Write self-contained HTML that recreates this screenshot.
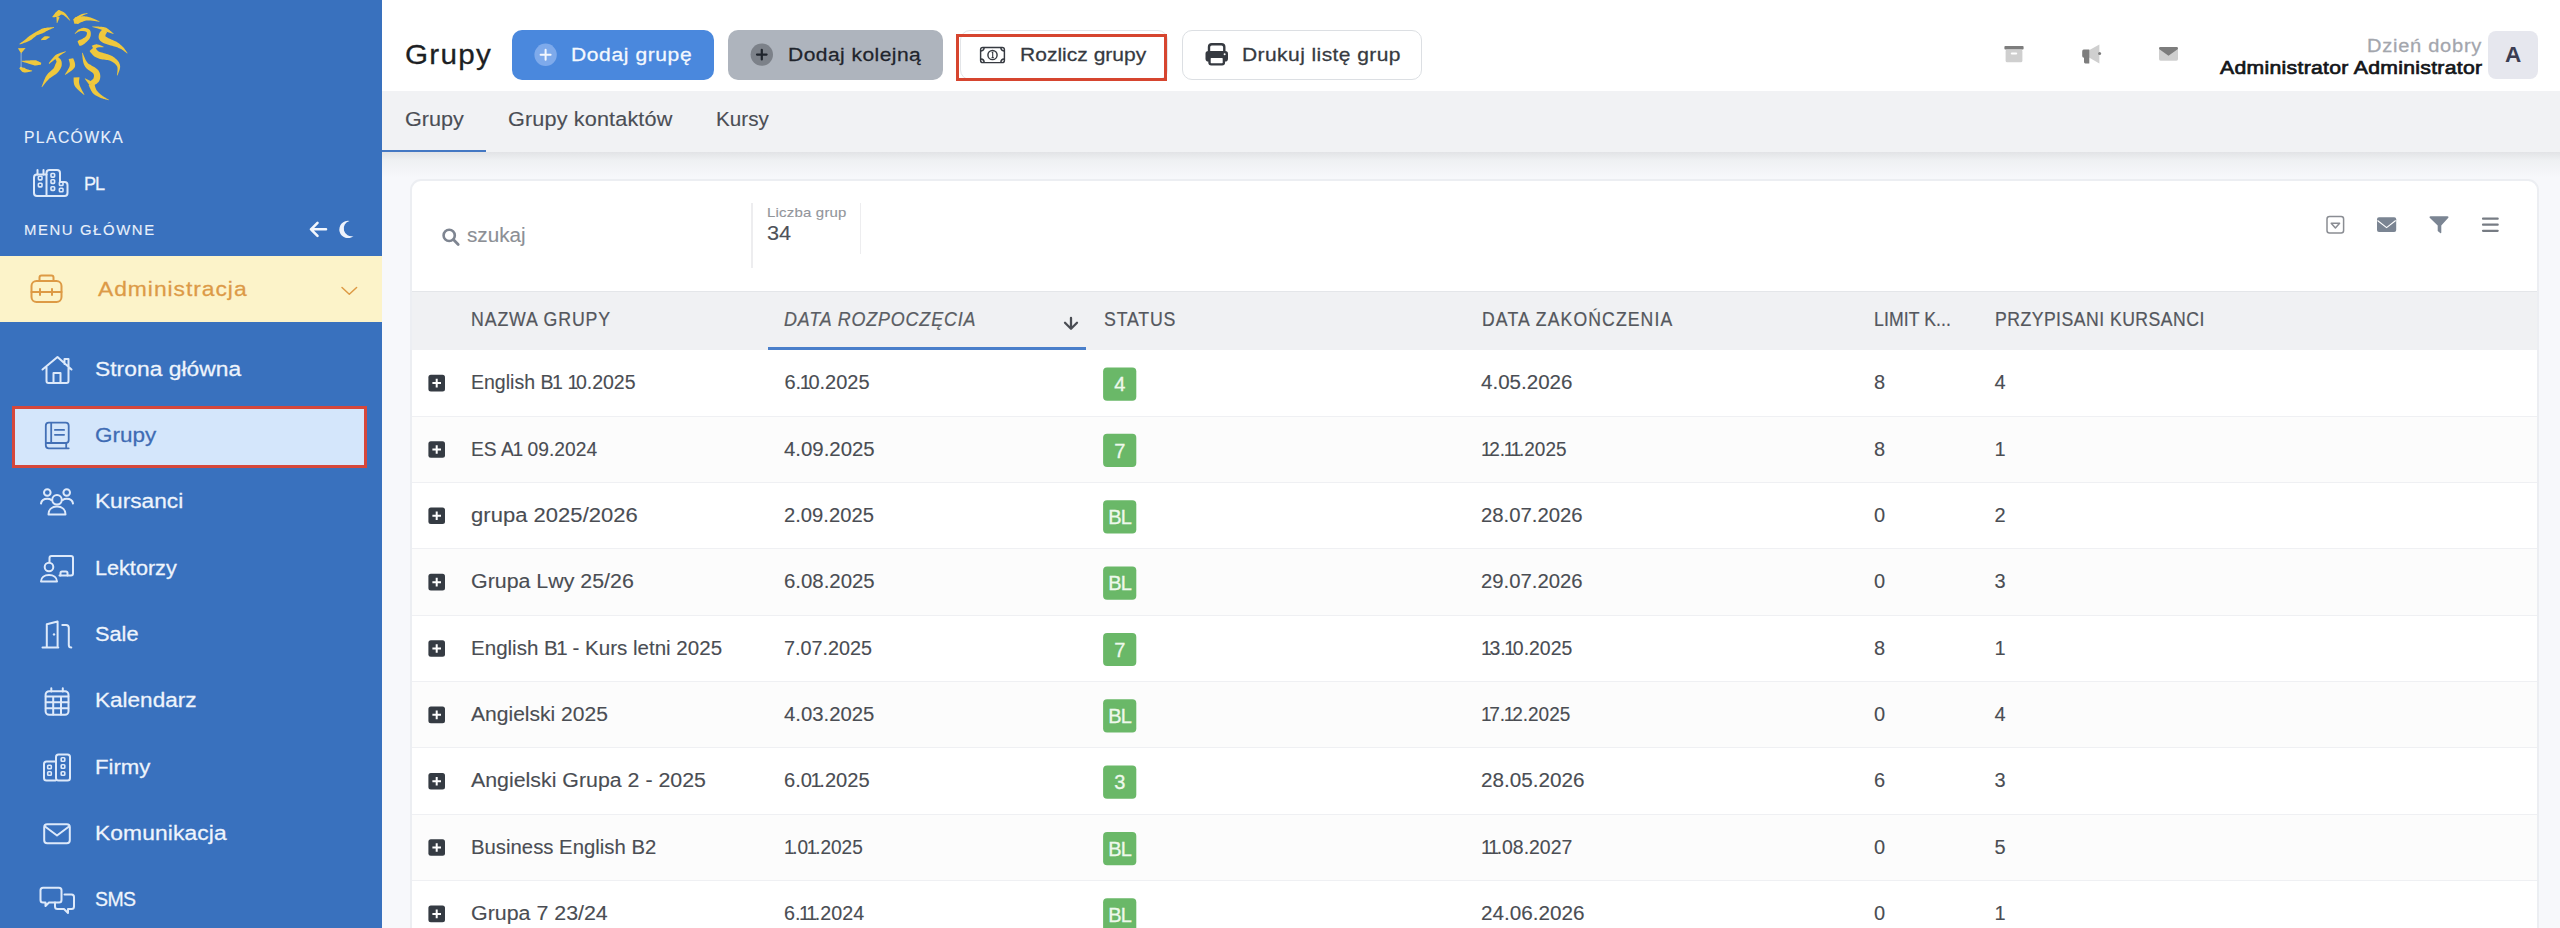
<!DOCTYPE html>
<html><head><meta charset="utf-8"><style>
*{margin:0;padding:0;box-sizing:border-box}
html,body{width:2560px;height:928px;overflow:hidden}
body{background:#f7f8fb;font-family:"Liberation Sans",sans-serif;position:relative}
.a{position:absolute}
.t{position:absolute;white-space:nowrap;line-height:1;transform-origin:0 0}
.one{margin:0 -2.4px 0 -1.4px}
</style></head><body>
<div class="a" style="left:0;top:0;width:382px;height:928px;background:#3971be;z-index:0"></div>
<div class="a" style="left:0;top:256px;width:382px;height:66px;background:#fcf3c9"></div>
<div class="a" style="left:12px;top:406px;width:355px;height:62px;background:#d4e6fb;border:3.5px solid #d5473b"></div>
<div class="a" style="left:382px;top:0;width:2178px;height:91px;background:#fff"></div>
<div class="a" style="left:382px;top:152px;width:2178px;height:26px;background:linear-gradient(#e2e3e6,#eef0f2 30%,#f7f8fb)"></div>
<div class="a" style="left:382px;top:91px;width:2178px;height:61px;background:#f1f2f4"></div>
<div class="a" style="left:382px;top:149.5px;width:103.5px;height:2.5px;background:#4478c3"></div>
<div class="a" style="left:512px;top:30px;width:202px;height:50px;background:#4a88dd;border-radius:10px"></div>
<div class="a" style="left:728px;top:30px;width:215px;height:50px;background:#aeb4bd;border-radius:10px"></div>
<div class="a" style="left:960px;top:30px;width:208px;height:50px;background:#fff;border:1px solid #e3e5e8;border-radius:10px"></div>
<div class="a" style="left:956px;top:33.5px;width:211px;height:47.5px;border:3px solid #d6452f"></div>
<div class="a" style="left:1182px;top:30px;width:240px;height:50px;background:#fff;border:1px solid #dcdfe3;border-radius:10px"></div>
<div class="a" style="left:2488px;top:31px;width:50px;height:48px;background:#e6e7ee;border-radius:8px"></div>
<div class="a" style="left:409.5px;top:179px;width:2129.5px;height:800px;background:#fff;border:2px solid #eceef2;border-radius:11px"></div>
<div class="a" style="left:751px;top:203px;width:1.5px;height:65px;background:#ededef"></div>
<div class="a" style="left:859.5px;top:203px;width:1.5px;height:51px;background:#ededef"></div>
<div class="a" style="left:411.5px;top:291px;width:2125.5px;height:59px;background:#f0f1f3;border-top:1px solid #e4e6e9"></div>
<div class="a" style="left:767.5px;top:347.3px;width:318px;height:2.4px;background:#4a7fca"></div>
<div class="a" style="left:411.5px;top:350.40px;width:2125.5px;height:66.35px;background:#ffffff;border-bottom:1px solid #eff0f3"></div>
<div class="a" style="left:411.5px;top:416.75px;width:2125.5px;height:66.35px;background:#fcfcfc;border-bottom:1px solid #eff0f3"></div>
<div class="a" style="left:411.5px;top:483.10px;width:2125.5px;height:66.35px;background:#ffffff;border-bottom:1px solid #eff0f3"></div>
<div class="a" style="left:411.5px;top:549.45px;width:2125.5px;height:66.35px;background:#fcfcfc;border-bottom:1px solid #eff0f3"></div>
<div class="a" style="left:411.5px;top:615.80px;width:2125.5px;height:66.35px;background:#ffffff;border-bottom:1px solid #eff0f3"></div>
<div class="a" style="left:411.5px;top:682.15px;width:2125.5px;height:66.35px;background:#fcfcfc;border-bottom:1px solid #eff0f3"></div>
<div class="a" style="left:411.5px;top:748.50px;width:2125.5px;height:66.35px;background:#ffffff;border-bottom:1px solid #eff0f3"></div>
<div class="a" style="left:411.5px;top:814.85px;width:2125.5px;height:66.35px;background:#fcfcfc;border-bottom:1px solid #eff0f3"></div>
<div class="a" style="left:411.5px;top:881.20px;width:2125.5px;height:66.35px;background:#ffffff;border-bottom:1px solid #eff0f3"></div>
<svg class="a" style="left:0;top:0" width="2560" height="928" viewBox="0 0 2560 928"><path d="M52.67,17.31 L52.78,17.28 L52.92,17.27 L53.09,17.25 L53.27,17.24 L53.46,17.23 L53.67,17.22 L53.89,17.20 L54.13,17.19 L54.37,17.17 L54.63,17.15 L54.89,17.14 L55.16,17.11 L55.43,17.09 L55.71,17.07 L55.99,17.04 L56.27,17.01 L56.55,16.98 L56.83,16.94 L57.11,16.90 L57.39,16.86 L57.66,16.81 L57.94,16.76 L58.19,16.68 L58.40,16.54 L58.62,16.40 L58.82,16.26 L59.03,16.11 L59.23,15.96 L59.44,15.81 L59.63,15.66 L59.83,15.51 L60.02,15.35 L60.21,15.20 L60.39,15.05 L60.57,14.90 L60.75,14.75 L60.92,14.61 L61.08,14.47 L61.24,14.33 L61.39,14.20 L61.53,14.08 L61.59,13.88 L61.64,13.69 L61.68,13.51 L61.71,13.35 L61.74,13.20 L61.76,13.08 L61.78,12.97 L59.22,10.03 L59.09,10.05 L58.93,10.09 L58.76,10.12 L58.59,10.15 L58.40,10.19 L58.20,10.22 L58.00,10.26 L57.87,10.39 L57.74,10.52 L57.60,10.66 L57.46,10.80 L57.31,10.94 L57.17,11.08 L57.02,11.22 L56.87,11.36 L56.72,11.50 L56.57,11.64 L56.42,11.77 L56.27,11.90 L56.13,12.03 L55.99,12.14 L55.85,12.26 L55.72,12.36 L55.60,12.46 L55.47,12.55 L55.36,12.71 L55.24,12.89 L55.12,13.09 L54.99,13.29 L54.85,13.50 L54.70,13.70 L54.55,13.92 L54.39,14.13 L54.23,14.34 L54.07,14.55 L53.91,14.76 L53.75,14.97 L53.59,15.17 L53.43,15.36 L53.28,15.55 L53.13,15.73 L52.99,15.91 L52.86,16.07 L52.74,16.22 L52.62,16.37 L52.52,16.50 L52.42,16.61 L52.33,16.69 Z" fill="#efc83d"/><path d="M57.39,13.99 L57.57,14.03 L57.79,14.06 L58.01,14.09 L58.23,14.12 L58.45,14.14 L58.68,14.16 L58.92,14.18 L59.16,14.20 L59.41,14.22 L59.67,14.25 L59.93,14.27 L60.20,14.30 L60.46,14.34 L60.73,14.37 L61.00,14.42 L61.27,14.46 L61.53,14.52 L61.80,14.58 L62.05,14.64 L62.31,14.71 L62.55,14.79 L62.79,14.88 L63.02,14.97 L63.25,15.08 L63.48,15.20 L63.73,15.35 L64.00,15.53 L64.29,15.73 L64.59,15.95 L64.89,16.18 L65.21,16.43 L65.53,16.70 L65.85,16.97 L66.17,17.25 L66.49,17.53 L66.81,17.81 L67.13,18.10 L67.44,18.38 L67.74,18.66 L68.03,18.93 L68.30,19.19 L68.57,19.44 L68.82,19.68 L69.06,19.90 L69.27,20.10 L69.45,20.31 L69.60,20.49 L69.74,20.64 L70.26,20.16 L70.13,20.02 L69.97,19.85 L69.80,19.65 L69.64,19.41 L69.46,19.14 L69.27,18.85 L69.07,18.55 L68.86,18.23 L68.64,17.89 L68.42,17.55 L68.18,17.19 L67.94,16.84 L67.69,16.47 L67.44,16.11 L67.18,15.75 L66.92,15.39 L66.65,15.04 L66.39,14.70 L66.12,14.37 L65.85,14.05 L65.58,13.74 L65.31,13.45 L65.03,13.18 L64.75,12.92 L64.47,12.69 L64.17,12.47 L63.86,12.26 L63.55,12.06 L63.24,11.88 L62.92,11.71 L62.61,11.55 L62.29,11.40 L61.97,11.26 L61.66,11.13 L61.36,11.01 L61.05,10.90 L60.76,10.79 L60.48,10.69 L60.21,10.60 L59.95,10.51 L59.70,10.43 L59.47,10.35 L59.27,10.28 L59.08,10.21 L58.92,10.15 L58.79,10.10 L58.70,10.06 L58.61,10.01 Z" fill="#efc83d"/><path d="M57.35,23.06 L57.36,22.99 L57.37,22.92 L57.38,22.84 L57.40,22.75 L57.41,22.65 L57.45,22.56 L57.50,22.46 L57.54,22.35 L57.58,22.23 L57.63,22.12 L57.68,22.00 L57.73,21.87 L57.79,21.74 L57.84,21.61 L57.90,21.47 L57.95,21.33 L58.01,21.19 L58.07,21.05 L58.13,20.90 L58.19,20.75 L58.25,20.60 L58.31,20.46 L58.37,20.31 L58.43,20.15 L58.49,20.00 L58.55,19.85 L58.61,19.71 L58.67,19.56 L58.73,19.41 L58.79,19.26 L58.85,19.12 L58.91,18.98 L58.96,18.84 L59.02,18.70 L59.07,18.57 L59.13,18.44 L59.18,18.31 L59.23,18.19 L59.27,18.08 L59.32,17.96 L59.36,17.85 L59.41,17.75 L59.45,17.66 L59.48,17.56 L59.52,17.48 L59.55,17.40 L59.58,17.33 L59.60,17.27 L56.40,16.73 L56.40,16.80 L56.41,16.88 L56.41,16.96 L56.41,17.05 L56.42,17.15 L56.43,17.26 L56.43,17.37 L56.44,17.48 L56.45,17.60 L56.45,17.73 L56.46,17.86 L56.47,18.00 L56.48,18.14 L56.48,18.28 L56.49,18.43 L56.50,18.58 L56.51,18.73 L56.52,18.88 L56.53,19.04 L56.53,19.20 L56.54,19.36 L56.55,19.52 L56.56,19.68 L56.57,19.85 L56.58,20.01 L56.59,20.17 L56.60,20.33 L56.61,20.49 L56.62,20.65 L56.62,20.81 L56.63,20.96 L56.64,21.11 L56.65,21.26 L56.66,21.41 L56.67,21.55 L56.67,21.69 L56.68,21.83 L56.69,21.96 L56.70,22.09 L56.70,22.21 L56.71,22.32 L56.71,22.43 L56.72,22.54 L56.71,22.63 L56.69,22.72 L56.68,22.80 L56.67,22.88 L56.65,22.94 Z" fill="#efc83d"/><path d="M19.79,44.54 L20.40,44.31 L21.22,44.02 L22.19,43.66 L23.28,43.27 L24.43,42.84 L25.62,42.39 L26.80,41.93 L27.92,41.47 L28.96,41.02 L29.94,40.56 L30.90,40.04 L31.74,39.38 L32.55,38.71 L33.32,38.07 L34.06,37.46 L34.74,36.89 L35.37,36.39 L35.95,35.96 L36.45,35.61 L36.87,35.35 L37.25,35.18 L37.58,35.05 L37.91,34.93 L38.27,34.80 L38.70,34.65 L39.20,34.47 L39.79,34.25 L40.47,34.00 L41.19,33.72 L41.94,33.43 L42.73,33.13 L43.54,32.84 L44.31,32.41 L45.05,31.94 L45.80,31.50 L46.54,31.09 L47.33,30.68 L48.22,30.25 L49.17,29.82 L50.14,29.40 L51.09,28.99 L51.99,28.62 L52.80,28.28 L53.48,28.00 L54.00,27.78 L53.80,27.02 L53.25,27.07 L52.52,27.13 L51.65,27.20 L50.67,27.29 L49.63,27.38 L48.55,27.49 L47.47,27.61 L46.43,27.75 L45.46,27.91 L44.53,28.10 L43.60,28.31 L42.67,28.53 L41.78,28.82 L40.98,29.24 L40.21,29.65 L39.49,30.05 L38.82,30.42 L38.21,30.75 L37.68,31.03 L37.24,31.26 L36.84,31.46 L36.45,31.66 L36.05,31.87 L35.64,32.11 L35.19,32.39 L34.67,32.69 L34.05,33.04 L33.35,33.46 L32.60,33.94 L31.82,34.46 L31.02,35.00 L30.19,35.56 L29.36,36.11 L28.51,36.66 L27.77,37.32 L27.04,37.98 L26.24,38.65 L25.33,39.38 L24.36,40.14 L23.37,40.90 L22.39,41.63 L21.47,42.32 L20.64,42.94 L19.94,43.46 L19.41,43.86 Z" fill="#efc83d"/><path d="M41.50,40.18 L41.61,40.17 L41.73,40.16 L41.87,40.15 L42.02,40.13 L42.19,40.12 L42.36,40.10 L42.55,40.08 L42.74,40.07 L42.95,40.05 L43.15,40.03 L43.37,40.01 L43.59,39.99 L43.81,39.97 L44.04,39.96 L44.26,39.94 L44.49,39.92 L44.71,39.91 L44.93,39.90 L45.15,39.89 L45.36,39.88 L45.57,39.88 L45.76,39.87 L45.95,39.87 L46.11,39.82 L46.24,39.70 L46.39,39.59 L46.54,39.47 L46.70,39.35 L46.87,39.22 L47.04,39.10 L47.22,38.98 L47.40,38.85 L47.58,38.73 L47.76,38.61 L47.94,38.49 L48.11,38.37 L48.29,38.25 L48.46,38.14 L48.63,38.03 L48.79,37.93 L48.95,37.82 L49.10,37.73 L49.24,37.64 L49.37,37.55 L49.50,37.47 L49.61,37.40 L49.71,37.34 L49.80,37.28 L49.60,36.52 L49.50,36.51 L49.39,36.50 L49.26,36.49 L49.11,36.47 L48.96,36.46 L48.79,36.44 L48.62,36.42 L48.43,36.40 L48.24,36.38 L48.03,36.36 L47.82,36.34 L47.61,36.32 L47.39,36.30 L47.17,36.28 L46.94,36.26 L46.71,36.24 L46.48,36.23 L46.25,36.21 L46.02,36.20 L45.79,36.19 L45.57,36.18 L45.34,36.18 L45.11,36.18 L44.89,36.18 L44.69,36.25 L44.51,36.38 L44.33,36.51 L44.14,36.66 L43.96,36.80 L43.77,36.95 L43.59,37.10 L43.40,37.25 L43.22,37.40 L43.04,37.55 L42.86,37.70 L42.69,37.85 L42.52,37.99 L42.35,38.14 L42.19,38.27 L42.03,38.41 L41.89,38.54 L41.75,38.66 L41.61,38.78 L41.49,38.88 L41.38,38.98 L41.27,39.07 L41.18,39.15 L41.10,39.22 Z" fill="#efc83d"/><path d="M21.75,61.59 L21.96,61.65 L22.19,61.72 L22.44,61.79 L22.73,61.87 L23.03,61.96 L23.35,62.06 L23.70,62.16 L24.06,62.27 L24.44,62.38 L24.83,62.49 L25.23,62.61 L25.64,62.73 L26.06,62.86 L26.49,62.98 L26.93,63.11 L27.36,63.24 L27.80,63.37 L28.24,63.50 L28.67,63.63 L29.10,63.76 L29.53,63.89 L29.94,64.02 L30.35,64.14 L30.75,64.27 L31.14,64.39 L31.56,64.52 L32.00,64.66 L32.44,64.80 L32.90,64.94 L33.37,65.09 L33.84,65.24 L34.31,65.39 L34.79,65.54 L35.29,65.54 L35.80,65.46 L36.30,65.38 L36.79,65.30 L37.28,65.23 L37.75,65.16 L38.20,65.09 L38.63,65.02 L39.05,64.96 L39.44,64.90 L39.81,64.84 L40.15,64.79 L40.45,64.74 L40.73,64.70 L40.97,64.67 L41.23,62.73 L41.02,62.63 L40.77,62.52 L40.48,62.39 L40.17,62.25 L39.84,62.09 L39.48,61.92 L39.10,61.75 L38.70,61.56 L38.28,61.37 L37.85,61.17 L37.40,60.97 L36.95,60.76 L36.49,60.55 L36.02,60.33 L35.54,60.19 L35.03,60.20 L34.53,60.22 L34.03,60.24 L33.54,60.25 L33.05,60.27 L32.58,60.29 L32.12,60.30 L31.68,60.32 L31.25,60.33 L30.83,60.35 L30.40,60.37 L29.96,60.39 L29.51,60.41 L29.06,60.43 L28.61,60.45 L28.15,60.48 L27.69,60.50 L27.23,60.52 L26.78,60.55 L26.33,60.57 L25.89,60.59 L25.46,60.62 L25.04,60.64 L24.64,60.66 L24.24,60.68 L23.87,60.70 L23.51,60.72 L23.17,60.74 L22.86,60.76 L22.56,60.77 L22.30,60.79 L22.06,60.80 L21.85,60.81 Z" fill="#efc83d"/><path d="M19.31,68.44 L19.39,68.54 L19.48,68.64 L19.58,68.77 L19.69,68.91 L19.82,69.07 L19.96,69.25 L20.11,69.43 L20.27,69.63 L20.45,69.83 L20.63,70.05 L20.82,70.27 L21.02,70.50 L21.23,70.73 L21.45,70.96 L21.68,71.20 L21.92,71.43 L22.17,71.67 L22.43,71.90 L22.70,72.12 L23.05,72.21 L23.40,72.28 L23.76,72.35 L24.12,72.40 L24.48,72.44 L24.84,72.46 L25.21,72.47 L25.57,72.46 L25.94,72.43 L26.30,72.40 L26.67,72.36 L27.04,72.31 L27.41,72.25 L27.78,72.18 L28.14,72.11 L28.50,72.04 L28.86,71.97 L29.20,71.89 L29.54,71.82 L29.87,71.74 L30.19,71.67 L30.49,71.59 L30.78,71.52 L31.05,71.46 L31.31,71.40 L31.54,71.34 L31.74,71.30 L31.93,71.26 L32.08,71.25 L32.12,70.55 L31.95,70.53 L31.76,70.48 L31.54,70.43 L31.31,70.37 L31.05,70.31 L30.78,70.25 L30.49,70.18 L30.19,70.11 L29.87,70.04 L29.55,69.96 L29.23,69.88 L28.89,69.79 L28.56,69.71 L28.23,69.61 L27.89,69.52 L27.57,69.42 L27.25,69.32 L26.94,69.21 L26.65,69.11 L26.38,69.00 L26.12,68.89 L25.89,68.78 L25.69,68.67 L25.52,68.56 L25.37,68.45 L25.21,68.32 L25.04,68.19 L24.88,68.05 L24.70,67.89 L24.46,67.87 L24.21,67.83 L23.95,67.79 L23.68,67.74 L23.42,67.68 L23.16,67.62 L22.89,67.55 L22.63,67.48 L22.38,67.41 L22.13,67.34 L21.88,67.26 L21.65,67.19 L21.42,67.11 L21.20,67.04 L20.99,66.98 L20.80,66.91 L20.61,66.85 L20.44,66.80 L20.29,66.76 Z" fill="#efc83d"/><path d="M74.38,23.70 L74.72,23.73 L75.12,23.75 L75.54,23.78 L76.00,23.80 L76.48,23.83 L76.99,23.86 L77.51,23.89 L78.04,23.88 L78.51,23.63 L78.99,23.38 L79.49,23.12 L79.99,22.87 L80.50,22.61 L81.02,22.36 L81.54,22.12 L82.06,21.89 L82.58,21.66 L83.10,21.45 L83.61,21.25 L84.12,21.07 L84.61,20.91 L85.09,20.76 L85.55,20.64 L86.00,20.54 L86.46,20.47 L86.96,20.42 L87.50,20.40 L88.07,20.40 L88.67,20.41 L89.29,20.43 L89.92,20.47 L90.57,20.53 L91.22,20.59 L91.88,20.66 L92.54,20.74 L93.19,20.83 L93.83,20.92 L94.46,21.01 L95.08,21.10 L95.68,21.20 L96.25,21.29 L96.80,21.38 L97.32,21.46 L97.80,21.54 L98.25,21.61 L98.66,21.67 L99.01,21.77 L99.32,21.84 L99.48,21.16 L99.18,21.09 L98.84,21.00 L98.47,20.84 L98.06,20.67 L97.61,20.47 L97.13,20.26 L96.62,20.04 L96.09,19.80 L95.53,19.56 L94.95,19.31 L94.35,19.05 L93.74,18.80 L93.11,18.54 L92.47,18.29 L91.83,18.05 L91.18,17.81 L90.52,17.58 L89.87,17.36 L89.21,17.16 L88.56,16.98 L87.92,16.82 L87.27,16.67 L86.63,16.56 L86.00,16.46 L85.36,16.38 L84.71,16.34 L84.06,16.31 L83.39,16.31 L82.73,16.32 L82.06,16.35 L81.39,16.39 L80.72,16.45 L80.06,16.51 L79.41,16.59 L78.77,16.67 L78.14,16.76 L77.52,16.85 L76.92,16.94 L76.35,17.03 L75.79,17.12 L75.35,17.43 L74.94,17.78 L74.57,18.11 L74.23,18.41 L73.92,18.68 L73.65,18.92 L73.43,19.12 L73.22,19.30 Z" fill="#efc83d"/><path d="M76.91,20.34 L77.05,20.23 L77.21,20.10 L77.38,19.95 L77.56,19.79 L77.75,19.61 L77.96,19.43 L78.18,19.23 L78.41,19.03 L78.64,18.81 L78.89,18.60 L79.14,18.37 L79.39,18.15 L79.65,17.92 L79.92,17.69 L80.18,17.47 L80.44,17.25 L80.71,17.03 L80.96,16.82 L81.22,16.62 L81.47,16.42 L81.71,16.24 L81.95,16.07 L82.17,15.92 L82.38,15.78 L82.59,15.65 L82.81,15.52 L83.03,15.40 L83.27,15.28 L83.51,15.16 L83.75,15.05 L84.00,14.94 L84.25,14.84 L84.50,14.73 L84.75,14.64 L85.00,14.54 L85.25,14.45 L85.49,14.37 L85.73,14.28 L85.96,14.20 L86.18,14.13 L86.40,14.06 L86.60,13.99 L86.80,13.93 L86.98,13.89 L87.16,13.85 L87.32,13.81 L87.47,13.77 L87.59,13.74 L87.41,13.06 L87.29,13.10 L87.15,13.13 L87.00,13.17 L86.83,13.20 L86.65,13.25 L86.45,13.27 L86.23,13.30 L86.00,13.32 L85.77,13.35 L85.52,13.38 L85.26,13.41 L85.00,13.45 L84.73,13.49 L84.46,13.53 L84.18,13.57 L83.90,13.62 L83.61,13.68 L83.33,13.74 L83.04,13.80 L82.75,13.87 L82.47,13.95 L82.18,14.03 L81.90,14.12 L81.62,14.22 L81.34,14.33 L81.05,14.45 L80.75,14.58 L80.45,14.73 L80.14,14.88 L79.82,15.03 L79.51,15.19 L79.19,15.36 L78.87,15.53 L78.55,15.70 L78.23,15.88 L77.92,16.05 L77.61,16.23 L77.31,16.40 L77.02,16.56 L76.74,16.72 L76.47,16.88 L76.22,17.02 L75.98,17.16 L75.76,17.29 L75.56,17.40 L75.38,17.50 L75.22,17.58 L75.09,17.66 Z" fill="#efc83d"/><path d="M75.13,33.97 L75.44,33.70 L75.88,33.36 L76.42,33.00 L77.02,32.60 L77.64,32.21 L78.28,31.86 L78.88,31.58 L79.43,31.38 L79.98,31.24 L80.57,31.12 L81.16,31.04 L81.75,30.99 L82.33,30.98 L82.87,31.00 L83.38,31.07 L83.84,31.14 L84.35,31.24 L84.91,31.37 L85.45,31.54 L85.96,31.74 L86.38,31.96 L86.68,32.17 L86.83,32.32 L86.86,32.40 L86.88,32.55 L86.92,32.90 L86.92,33.37 L86.86,33.91 L86.75,34.48 L86.58,35.05 L86.37,35.55 L86.15,35.96 L85.86,36.33 L85.45,36.76 L84.89,37.22 L84.25,37.67 L83.56,38.12 L82.85,38.54 L82.15,38.93 L81.55,39.26 L81.03,39.50 L80.50,39.69 L79.93,39.87 L79.34,40.03 L78.79,40.27 L78.34,40.70 L77.91,41.07 L77.57,41.38 L79.23,45.62 L79.59,45.65 L80.09,45.70 L80.75,45.74 L81.44,45.53 L82.16,45.17 L82.93,44.76 L83.72,44.27 L84.45,43.74 L85.12,43.19 L85.81,42.61 L86.53,41.96 L87.26,41.27 L87.98,40.52 L88.67,39.74 L89.31,38.92 L89.85,38.04 L90.25,37.12 L90.54,36.18 L90.73,35.23 L90.82,34.28 L90.83,33.33 L90.74,32.41 L90.53,31.50 L90.14,30.60 L89.53,29.80 L88.80,29.20 L88.02,28.77 L87.23,28.45 L86.43,28.21 L85.65,28.04 L84.89,27.93 L84.16,27.86 L83.41,27.86 L82.65,27.97 L81.92,28.14 L81.20,28.36 L80.50,28.63 L79.83,28.93 L79.19,29.26 L78.57,29.62 L77.95,30.06 L77.36,30.58 L76.79,31.14 L76.26,31.72 L75.78,32.28 L75.35,32.78 L74.98,33.17 L74.67,33.43 Z" fill="#efc83d"/><path d="M92.34,27.04 L92.60,27.09 L92.89,27.14 L93.22,27.21 L93.57,27.31 L93.96,27.41 L94.37,27.53 L94.81,27.65 L95.27,27.77 L95.74,27.90 L96.23,28.04 L96.74,28.18 L97.25,28.33 L97.77,28.48 L98.29,28.64 L98.82,28.80 L99.34,28.97 L99.86,29.14 L100.37,29.31 L100.86,29.49 L101.35,29.67 L101.81,29.85 L102.26,30.04 L102.67,30.22 L103.06,30.41 L103.44,30.60 L103.84,30.82 L104.24,31.05 L104.65,31.29 L105.13,31.42 L105.62,31.55 L106.12,31.68 L106.63,31.82 L107.13,31.97 L107.64,32.12 L108.14,32.28 L108.63,32.43 L109.12,32.59 L109.59,32.75 L110.05,32.91 L110.50,33.06 L110.93,33.21 L111.34,33.35 L111.72,33.48 L112.09,33.61 L112.42,33.72 L112.73,33.82 L113.01,33.91 L113.24,34.01 L113.56,33.39 L113.35,33.26 L113.13,33.08 L112.88,32.88 L112.61,32.66 L112.32,32.42 L112.01,32.16 L111.67,31.88 L111.32,31.59 L110.96,31.29 L110.57,30.98 L110.18,30.66 L109.77,30.33 L109.35,30.00 L108.92,29.66 L108.48,29.33 L108.04,29.00 L107.59,28.67 L107.13,28.34 L106.67,28.02 L106.20,27.73 L105.68,27.58 L105.16,27.43 L104.64,27.31 L104.14,27.19 L103.63,27.09 L103.10,27.00 L102.57,26.93 L102.02,26.86 L101.47,26.80 L100.91,26.75 L100.34,26.70 L99.77,26.66 L99.20,26.63 L98.64,26.60 L98.08,26.58 L97.53,26.56 L96.98,26.54 L96.46,26.53 L95.94,26.52 L95.45,26.51 L94.97,26.50 L94.52,26.50 L94.09,26.49 L93.69,26.48 L93.33,26.48 L93.00,26.45 L92.71,26.40 L92.46,26.36 Z" fill="#efc83d"/><path d="M102.88,29.00 L102.67,29.22 L102.35,29.52 L101.91,29.94 L101.40,30.46 L100.86,31.05 L100.30,31.73 L99.76,32.51 L99.28,33.45 L98.97,34.43 L98.81,35.18 L98.70,35.84 L98.63,36.66 L98.67,37.63 L98.93,38.69 L99.46,39.75 L100.18,40.72 L101.06,41.56 L102.11,42.31 L103.34,42.96 L104.69,43.52 L106.14,44.02 L107.66,44.49 L109.20,44.94 L110.70,45.38 L112.12,45.79 L113.37,46.19 L114.43,46.55 L115.39,46.83 L116.28,47.10 L117.07,47.37 L117.80,47.62 L118.48,47.88 L119.14,48.15 L119.78,48.44 L120.44,48.77 L121.12,49.12 L121.84,49.53 L122.60,50.02 L123.39,50.56 L124.17,51.14 L124.93,51.71 L125.63,52.26 L126.26,52.75 L126.79,53.18 L127.15,53.54 L127.65,53.06 L127.30,52.69 L126.91,52.15 L126.45,51.48 L125.94,50.74 L125.37,49.95 L124.78,49.14 L124.16,48.34 L123.52,47.57 L122.88,46.88 L122.26,46.27 L121.67,45.70 L121.06,45.16 L120.44,44.63 L119.78,44.11 L119.08,43.59 L118.33,43.05 L117.51,42.48 L116.57,41.85 L115.40,41.25 L114.07,40.63 L112.65,40.01 L111.20,39.38 L109.78,38.76 L108.46,38.15 L107.31,37.58 L106.42,37.08 L105.89,36.69 L105.63,36.42 L105.54,36.26 L105.56,36.22 L105.63,36.28 L105.63,36.35 L105.57,36.33 L105.51,36.15 L105.48,35.82 L105.43,35.57 L105.37,35.50 L105.37,35.32 L105.49,34.94 L105.71,34.45 L105.99,33.92 L106.29,33.39 L106.61,32.88 L106.91,32.39 L107.12,32.00 Z" fill="#efc83d"/><path d="M103.66,46.65 L103.51,46.63 L103.34,46.60 L103.15,46.54 L102.94,46.45 L102.71,46.35 L102.46,46.24 L102.20,46.12 L101.93,46.00 L101.64,45.87 L101.34,45.74 L101.04,45.61 L100.72,45.48 L100.40,45.35 L100.08,45.22 L99.76,45.10 L99.43,44.98 L99.10,44.86 L98.78,44.75 L98.45,44.66 L98.13,44.57 L97.81,44.49 L97.49,44.43 L97.17,44.38 L96.84,44.35 L96.52,44.35 L96.20,44.36 L95.88,44.39 L95.57,44.43 L95.27,44.49 L94.98,44.55 L94.70,44.63 L94.42,44.71 L94.16,44.79 L93.90,44.89 L93.65,44.98 L93.42,45.07 L93.19,45.17 L92.98,45.26 L92.77,45.35 L92.59,45.43 L92.41,45.51 L92.25,45.58 L92.11,45.64 L91.99,45.69 L91.89,45.72 L91.83,45.73 L91.80,45.72 L91.76,45.71 L94.24,50.29 L94.37,50.19 L94.54,50.06 L94.69,49.93 L94.82,49.81 L94.95,49.68 L95.06,49.56 L95.18,49.43 L95.30,49.31 L95.41,49.18 L95.53,49.05 L95.64,48.93 L95.76,48.80 L95.88,48.68 L95.99,48.56 L96.11,48.44 L96.23,48.33 L96.35,48.22 L96.47,48.12 L96.58,48.02 L96.70,47.94 L96.82,47.85 L96.93,47.78 L97.04,47.71 L97.16,47.65 L97.29,47.59 L97.47,47.54 L97.68,47.49 L97.92,47.44 L98.19,47.40 L98.47,47.37 L98.76,47.34 L99.07,47.32 L99.39,47.30 L99.72,47.29 L100.05,47.28 L100.38,47.27 L100.71,47.26 L101.03,47.26 L101.35,47.26 L101.66,47.26 L101.96,47.26 L102.24,47.26 L102.51,47.27 L102.77,47.27 L103.00,47.27 L103.21,47.29 L103.39,47.32 L103.54,47.35 Z" fill="#efc83d"/><path d="M89.57,51.06 L89.75,51.26 L89.95,51.51 L90.24,51.91 L90.60,52.41 L91.04,52.99 L91.54,53.62 L92.12,54.30 L92.78,55.00 L93.53,55.70 L94.37,56.38 L95.31,57.02 L96.36,57.61 L97.52,58.12 L98.74,58.53 L99.99,58.88 L101.26,59.19 L102.57,59.39 L103.88,59.56 L105.16,59.73 L106.38,59.91 L107.54,60.11 L108.58,60.33 L109.49,60.57 L110.26,60.84 L111.02,61.18 L111.78,61.56 L112.50,61.96 L113.19,62.38 L113.83,62.83 L114.42,63.28 L114.96,63.75 L115.45,64.24 L115.92,64.71 L116.34,65.20 L116.71,65.70 L117.01,66.18 L117.23,66.68 L117.40,67.32 L117.50,68.09 L117.54,68.95 L117.52,69.87 L117.45,70.81 L117.36,71.74 L117.25,72.63 L117.14,73.47 L117.04,74.21 L116.95,74.85 L116.86,75.34 L117.54,75.46 L117.63,75.00 L117.83,74.42 L118.12,73.73 L118.44,72.95 L118.79,72.09 L119.13,71.18 L119.46,70.23 L119.75,69.25 L119.97,68.25 L120.11,67.24 L120.13,66.21 L119.99,65.22 L119.74,64.32 L119.42,63.46 L119.02,62.62 L118.54,61.81 L117.97,61.04 L117.34,60.29 L116.66,59.57 L115.93,58.88 L115.16,58.22 L114.34,57.58 L113.48,56.97 L112.54,56.36 L111.45,55.77 L110.26,55.25 L109.01,54.78 L107.73,54.35 L106.44,53.95 L105.16,53.58 L103.91,53.21 L102.73,52.86 L101.62,52.59 L100.64,52.32 L99.84,52.05 L99.24,51.79 L98.74,51.51 L98.26,51.17 L97.80,50.80 L97.37,50.39 L96.95,49.95 L96.56,49.49 L96.18,49.02 L95.83,48.54 L95.48,48.07 L95.14,47.60 L94.76,47.11 L94.43,46.74 Z" fill="#efc83d"/><path d="M65.54,51.19 L65.35,51.28 L65.13,51.39 L64.87,51.50 L64.58,51.59 L64.26,51.69 L63.92,51.79 L63.56,51.90 L63.17,52.02 L62.78,52.14 L62.36,52.27 L61.94,52.40 L61.50,52.54 L61.05,52.69 L60.60,52.84 L60.14,53.00 L59.68,53.17 L59.22,53.34 L58.76,53.52 L58.30,53.70 L57.84,53.89 L57.39,54.09 L56.95,54.30 L56.52,54.52 L56.10,54.74 L55.68,54.98 L55.29,55.30 L54.93,55.66 L54.57,56.03 L54.20,56.42 L53.84,56.82 L53.48,57.22 L53.12,57.63 L52.76,58.05 L52.41,58.46 L52.06,58.88 L51.72,59.29 L51.39,59.70 L51.07,60.10 L50.76,60.49 L50.46,60.86 L50.17,61.22 L49.90,61.57 L49.64,61.89 L49.40,62.19 L49.18,62.47 L48.98,62.72 L48.80,62.94 L48.64,63.12 L49.36,63.88 L49.56,63.72 L49.79,63.54 L50.04,63.33 L50.32,63.11 L50.62,62.86 L50.94,62.60 L51.28,62.32 L51.64,62.03 L52.01,61.72 L52.39,61.41 L52.78,61.09 L53.19,60.77 L53.60,60.45 L54.01,60.12 L54.43,59.80 L54.85,59.48 L55.27,59.17 L55.69,58.86 L56.10,58.57 L56.50,58.29 L56.89,58.03 L57.27,57.79 L57.62,57.54 L57.90,57.26 L58.19,56.99 L58.50,56.71 L58.83,56.43 L59.18,56.15 L59.53,55.88 L59.90,55.60 L60.28,55.33 L60.66,55.06 L61.04,54.79 L61.43,54.53 L61.82,54.27 L62.20,54.02 L62.58,53.78 L62.95,53.54 L63.31,53.31 L63.66,53.09 L64.00,52.88 L64.32,52.68 L64.63,52.50 L64.91,52.32 L65.18,52.15 L65.43,52.02 L65.66,51.91 L65.86,51.81 Z" fill="#efc83d"/><path d="M54.49,57.82 L54.67,58.14 L54.93,58.53 L55.21,58.93 L55.49,59.36 L55.77,59.80 L56.04,60.26 L56.26,60.71 L56.44,61.14 L56.54,61.53 L56.56,61.83 L56.50,62.03 L56.40,62.16 L56.28,62.41 L56.11,62.79 L55.90,63.22 L55.64,63.68 L55.38,64.18 L55.22,64.75 L55.02,65.34 L54.79,65.94 L54.53,66.54 L54.24,67.13 L53.93,67.70 L53.63,68.21 L53.32,68.65 L52.94,69.10 L52.46,69.58 L51.90,70.09 L51.27,70.62 L50.59,71.19 L49.86,71.78 L49.11,72.41 L48.37,73.11 L47.67,73.90 L47.00,74.75 L46.39,75.64 L45.84,76.59 L45.32,77.59 L44.82,78.64 L44.35,79.72 L43.89,80.81 L43.46,81.89 L43.06,82.94 L42.69,83.93 L42.35,84.84 L42.05,85.65 L41.79,86.33 L41.50,86.82 L42.10,87.18 L42.40,86.68 L42.86,86.11 L43.39,85.43 L43.99,84.66 L44.64,83.84 L45.34,82.98 L46.06,82.11 L46.79,81.24 L47.53,80.41 L48.26,79.63 L48.96,78.93 L49.61,78.36 L50.24,77.88 L50.90,77.44 L51.61,77.02 L52.33,76.56 L53.06,76.06 L53.81,75.56 L54.59,75.05 L55.37,74.50 L56.16,73.92 L56.94,73.28 L57.69,72.57 L58.37,71.79 L58.96,71.02 L59.49,70.25 L59.98,69.46 L60.43,68.65 L60.85,67.83 L61.22,67.00 L61.55,66.16 L61.69,65.28 L61.75,64.41 L61.76,63.55 L61.71,62.72 L61.60,61.84 L61.35,60.90 L60.95,60.04 L60.46,59.32 L59.93,58.71 L59.39,58.19 L58.84,57.74 L58.30,57.35 L57.80,57.01 L57.36,56.73 L56.98,56.49 L56.70,56.32 L56.51,56.18 Z" fill="#efc83d"/><path d="M68.67,59.07 L68.71,59.31 L68.78,59.61 L68.86,59.90 L68.94,60.19 L69.02,60.48 L69.11,60.77 L69.20,61.07 L69.29,61.37 L69.37,61.68 L69.46,61.99 L69.54,62.31 L69.61,62.62 L69.67,62.93 L69.73,63.24 L69.77,63.54 L69.80,63.82 L69.82,64.10 L69.82,64.35 L69.81,64.59 L69.79,64.80 L69.76,64.98 L69.71,65.14 L69.67,65.27 L69.70,65.40 L69.72,65.58 L69.69,65.82 L69.62,66.13 L69.51,66.48 L69.37,66.86 L69.20,67.28 L69.00,67.71 L68.77,68.16 L68.53,68.62 L68.27,69.09 L68.00,69.56 L67.73,70.03 L67.44,70.50 L67.16,70.95 L66.87,71.40 L66.60,71.84 L66.32,72.26 L66.06,72.66 L65.82,73.05 L65.59,73.40 L65.38,73.73 L65.19,74.03 L65.01,74.28 L64.84,74.47 L65.36,74.93 L65.53,74.75 L65.75,74.55 L66.03,74.36 L66.35,74.15 L66.70,73.93 L67.08,73.68 L67.48,73.42 L67.91,73.15 L68.35,72.86 L68.80,72.57 L69.27,72.25 L69.74,71.93 L70.21,71.60 L70.68,71.26 L71.15,70.92 L71.61,70.56 L72.06,70.19 L72.50,69.82 L72.92,69.43 L73.33,69.03 L73.71,68.62 L74.07,68.18 L74.40,67.71 L74.70,67.20 L74.95,66.65 L75.05,66.08 L75.10,65.52 L75.12,64.98 L75.10,64.45 L75.05,63.94 L74.97,63.45 L74.88,62.97 L74.77,62.51 L74.65,62.07 L74.52,61.64 L74.38,61.23 L74.24,60.83 L74.09,60.46 L73.95,60.10 L73.81,59.77 L73.68,59.45 L73.55,59.16 L73.44,58.90 L73.34,58.67 L73.26,58.48 L73.20,58.33 L73.16,58.24 L73.13,58.13 Z" fill="#efc83d"/><path d="M81.96,52.90 L82.13,53.47 L82.21,54.22 L82.29,55.11 L82.37,56.13 L82.48,57.23 L82.60,58.40 L82.77,59.62 L82.97,60.85 L83.23,62.09 L83.55,63.30 L83.97,64.48 L84.50,65.62 L85.18,66.69 L85.98,67.70 L86.86,68.64 L87.83,69.44 L88.82,70.16 L89.80,70.83 L90.72,71.47 L91.56,72.06 L92.29,72.62 L92.87,73.12 L93.27,73.52 L93.49,73.84 L93.65,74.18 L93.80,74.54 L93.90,74.90 L93.96,75.26 L93.99,75.62 L93.99,75.98 L93.96,76.35 L93.90,76.72 L93.81,77.08 L93.71,77.43 L93.62,77.79 L93.59,78.03 L93.59,78.14 L93.52,78.30 L93.34,78.58 L93.05,78.92 L92.68,79.29 L92.26,79.68 L91.81,80.06 L91.34,80.43 L90.89,80.79 L90.45,81.13 L90.03,81.46 L89.71,81.74 L92.89,85.86 L93.11,85.72 L93.42,85.56 L93.85,85.32 L94.38,85.03 L94.98,84.70 L95.61,84.32 L96.28,83.90 L96.96,83.41 L97.63,82.86 L98.29,82.21 L98.92,81.43 L99.41,80.57 L99.74,79.80 L99.98,79.09 L100.13,78.32 L100.23,77.52 L100.29,76.68 L100.27,75.82 L100.19,74.92 L100.02,74.01 L99.75,73.09 L99.39,72.18 L98.92,71.28 L98.31,70.36 L97.52,69.45 L96.61,68.67 L95.66,67.98 L94.69,67.36 L93.70,66.78 L92.72,66.22 L91.76,65.66 L90.85,65.11 L90.00,64.59 L89.19,64.13 L88.49,63.67 L87.90,63.18 L87.35,62.59 L86.78,61.82 L86.22,60.92 L85.68,59.93 L85.17,58.90 L84.68,57.84 L84.23,56.79 L83.82,55.78 L83.44,54.84 L83.11,54.00 L82.81,53.28 L82.64,52.70 Z" fill="#efc83d"/><path d="M88.58,84.89 L88.69,85.11 L88.82,85.38 L88.97,85.73 L89.14,86.16 L89.34,86.63 L89.55,87.15 L89.79,87.69 L90.03,88.27 L90.30,88.86 L90.58,89.46 L90.88,90.07 L91.20,90.67 L91.54,91.26 L91.90,91.84 L92.29,92.41 L92.70,92.93 L93.11,93.40 L93.53,93.83 L93.97,94.24 L94.43,94.60 L94.91,94.94 L95.39,95.26 L95.87,95.56 L96.36,95.84 L96.85,96.11 L97.34,96.36 L97.84,96.60 L98.33,96.84 L98.82,97.06 L99.31,97.28 L99.80,97.50 L100.29,97.71 L100.82,97.93 L101.38,98.15 L101.97,98.36 L102.57,98.55 L103.18,98.75 L103.79,98.93 L104.40,99.10 L105.00,99.27 L105.59,99.43 L106.16,99.57 L106.69,99.71 L107.19,99.84 L107.65,99.96 L108.06,100.06 L108.39,100.20 L108.66,100.32 L108.94,99.68 L108.66,99.56 L108.32,99.42 L107.95,99.21 L107.54,98.97 L107.09,98.72 L106.61,98.45 L106.11,98.16 L105.60,97.86 L105.07,97.54 L104.54,97.22 L104.02,96.90 L103.50,96.57 L103.01,96.24 L102.54,95.92 L102.11,95.60 L101.71,95.29 L101.32,94.97 L100.91,94.65 L100.52,94.32 L100.13,94.00 L99.75,93.67 L99.38,93.35 L99.02,93.02 L98.68,92.69 L98.35,92.35 L98.04,92.02 L97.74,91.68 L97.47,91.35 L97.21,91.01 L96.95,90.70 L96.71,90.38 L96.50,90.07 L96.32,89.75 L96.14,89.38 L95.95,88.96 L95.76,88.50 L95.58,88.00 L95.40,87.48 L95.23,86.95 L95.07,86.41 L94.91,85.87 L94.77,85.34 L94.63,84.83 L94.50,84.34 L94.37,83.88 L94.25,83.45 L94.13,83.04 L94.02,82.71 Z" fill="#efc83d"/><path d="M84.78,78.87 L84.85,78.93 L84.92,78.99 L85.01,79.06 L85.09,79.15 L85.17,79.25 L85.26,79.37 L85.34,79.49 L85.44,79.61 L85.54,79.75 L85.64,79.88 L85.74,80.03 L85.85,80.17 L85.97,80.32 L86.08,80.48 L86.20,80.64 L86.32,80.80 L86.44,80.97 L86.57,81.14 L86.70,81.31 L86.82,81.48 L86.95,81.65 L87.08,81.83 L87.21,82.00 L87.34,82.18 L87.47,82.35 L87.60,82.53 L87.73,82.70 L87.86,82.88 L87.99,83.05 L88.12,83.22 L88.24,83.39 L88.37,83.55 L88.49,83.72 L88.60,83.88 L88.72,84.03 L88.83,84.18 L88.94,84.33 L89.05,84.47 L89.15,84.61 L89.25,84.74 L89.34,84.87 L89.43,84.99 L89.51,85.10 L89.59,85.21 L89.67,85.31 L89.73,85.40 L89.80,85.48 L89.85,85.55 L92.75,82.05 L92.66,82.01 L92.57,81.96 L92.47,81.91 L92.36,81.86 L92.24,81.80 L92.11,81.74 L91.98,81.67 L91.84,81.61 L91.69,81.54 L91.53,81.46 L91.37,81.38 L91.21,81.30 L91.04,81.22 L90.86,81.14 L90.68,81.05 L90.50,80.97 L90.32,80.88 L90.13,80.79 L89.94,80.69 L89.74,80.60 L89.55,80.51 L89.35,80.41 L89.15,80.32 L88.96,80.22 L88.76,80.13 L88.56,80.03 L88.37,79.94 L88.17,79.84 L87.98,79.75 L87.79,79.66 L87.60,79.57 L87.41,79.48 L87.23,79.39 L87.05,79.31 L86.88,79.22 L86.71,79.14 L86.54,79.06 L86.38,78.98 L86.23,78.91 L86.08,78.84 L85.94,78.77 L85.80,78.71 L85.68,78.64 L85.56,78.59 L85.46,78.52 L85.37,78.45 L85.29,78.39 L85.22,78.33 Z" fill="#efc83d"/><path d="M73.58,77.44 L73.59,77.54 L73.60,77.63 L73.61,77.77 L73.62,77.97 L73.62,78.20 L73.61,78.46 L73.61,78.75 L73.61,79.07 L73.60,79.41 L73.60,79.77 L73.61,80.15 L73.62,80.55 L73.64,80.96 L73.66,81.39 L73.70,81.83 L73.75,82.28 L73.82,82.73 L73.90,83.20 L73.99,83.68 L74.11,84.16 L74.25,84.64 L74.42,85.13 L74.61,85.61 L74.84,86.10 L75.12,86.55 L75.45,87.00 L75.80,87.43 L76.18,87.86 L76.57,88.29 L76.98,88.72 L77.41,89.15 L77.85,89.57 L78.30,90.00 L78.75,90.42 L79.21,90.83 L79.67,91.24 L80.13,91.64 L80.58,92.03 L81.02,92.40 L81.44,92.77 L81.85,93.11 L82.24,93.45 L82.61,93.76 L82.95,94.05 L83.27,94.31 L83.55,94.55 L83.76,94.79 L83.92,95.01 L84.48,94.59 L84.31,94.37 L84.13,94.10 L83.95,93.76 L83.75,93.40 L83.53,93.00 L83.30,92.58 L83.05,92.13 L82.79,91.66 L82.53,91.18 L82.26,90.67 L81.98,90.16 L81.70,89.64 L81.43,89.11 L81.16,88.58 L80.90,88.05 L80.65,87.53 L80.41,87.02 L80.19,86.52 L79.98,86.04 L79.80,85.58 L79.65,85.15 L79.52,84.75 L79.43,84.40 L79.36,84.10 L79.29,83.85 L79.22,83.59 L79.17,83.32 L79.12,83.04 L79.09,82.76 L79.06,82.47 L79.05,82.17 L79.04,81.87 L79.04,81.56 L79.05,81.25 L79.07,80.94 L79.09,80.64 L79.12,80.33 L79.15,80.03 L79.19,79.73 L79.22,79.43 L79.26,79.14 L79.30,78.85 L79.33,78.57 L79.36,78.29 L79.39,78.00 L79.41,77.71 L79.42,77.41 L79.42,77.16 Z" fill="#efc83d"/><path d="M17.9,48.2 L25.6,48 L21.1,53.4 Z" fill="#efc83d"/><path d="M21.1,53 V68" stroke="#b9cfe0" stroke-width="0.9" opacity="0.8"/><path d="M46.5,196 H37 a3,3 0 0 1 -3,-3 V177.5 a3,3 0 0 1 3,-3 H46.5" fill="none" stroke="#dde9fa" stroke-width="2" stroke-linecap="round" stroke-linejoin="round"/><path d="M37.5,170 V174.5 M43.5,170 V174.5" fill="none" stroke="#dde9fa" stroke-width="2" stroke-linecap="round" stroke-linejoin="round"/><path d="M46.5,196 V173 a3,3 0 0 1 3,-3 H57 a3,3 0 0 1 3,3 V182 H64.5 a3,3 0 0 1 3,3 V193 a3,3 0 0 1 -3,3 Z" fill="none" stroke="#dde9fa" stroke-width="2" stroke-linecap="round" stroke-linejoin="round"/><rect x="38.400000000000006" y="176.29999999999998" width="3.6" height="3.6" rx="0.8" fill="none" stroke="#dde9fa" stroke-width="1.6"/><rect x="38.400000000000006" y="183.29999999999998" width="3.6" height="3.6" rx="0.8" fill="none" stroke="#dde9fa" stroke-width="1.6"/><rect x="51.0" y="173.5" width="3.6" height="3.6" rx="0.8" fill="none" stroke="#dde9fa" stroke-width="1.6"/><rect x="51.0" y="179.79999999999998" width="3.6" height="3.6" rx="0.8" fill="none" stroke="#dde9fa" stroke-width="1.6"/><rect x="51.0" y="186.79999999999998" width="3.6" height="3.6" rx="0.8" fill="none" stroke="#dde9fa" stroke-width="1.6"/><rect x="59.400000000000006" y="181.89999999999998" width="3.6" height="3.6" rx="0.8" fill="none" stroke="#dde9fa" stroke-width="1.6"/><rect x="59.400000000000006" y="188.2" width="3.6" height="3.6" rx="0.8" fill="none" stroke="#dde9fa" stroke-width="1.6"/><path d="M326,229.3 H311 M317.5,222.8 L311,229.3 L317.5,235.8" fill="none" stroke="#f2f6fd" stroke-width="2.6" stroke-linecap="round" stroke-linejoin="round"/><path d="M349.5,221 A8.6,8.6 0 1 0 353.5,236 A7.6,7.6 0 0 1 349.5,221 Z" fill="#eef3fc"/><path d="M39.5,281 V277.5 a2,2 0 0 1 2,-2 H51.5 a2,2 0 0 1 2,2 V281" fill="none" stroke="#dd9a45" stroke-width="2" stroke-linecap="round" stroke-linejoin="round"/><rect x="31.5" y="281" width="30" height="21" rx="5" fill="none" stroke="#dd9a45" stroke-width="2" stroke-linecap="round" stroke-linejoin="round"/><path d="M31.5,292 H61.5 M40,289 V295 M52,289 V295" fill="none" stroke="#dd9a45" stroke-width="2" stroke-linecap="round" stroke-linejoin="round"/><path d="M342,287.5 L349.3,294.3 L356.6,287.5" fill="none" stroke="#dd9a45" stroke-width="1.5" stroke-linecap="round" stroke-linejoin="round"/><path d="M42.5,369.5 L57.5,357 L71.5,369.5 M64.5,364 V359 H68.5 V367.5 M46.5,367 V381 a2,2 0 0 0 2,2 H66.5 a2,2 0 0 0 2,-2 V367 M53.5,383 V373 H60.5 V383" fill="none" stroke="#dde9fa" stroke-width="2" stroke-linecap="round" stroke-linejoin="round"/><path d="M48.8,422.7 H65.7 a3,3 0 0 1 3,3 V440 a3,3 0 0 1 -2.5,3 V448.3 H48.8 a3,3 0 0 1 -3,-3 V425.7 a3,3 0 0 1 3,-3 Z M45.8,443 H66.2 M51.2,423 V443 M66.2,448.3 H68.7 M54.9,429.9 H64.1 M54.9,434.8 H64.1" fill="none" stroke="#4370b6" stroke-width="1.8" stroke-linecap="round" stroke-linejoin="round"/><circle cx="57" cy="499.8" r="4.8" fill="none" stroke="#dde9fa" stroke-width="2" stroke-linecap="round" stroke-linejoin="round"/><circle cx="47.3" cy="492.5" r="3.3" fill="none" stroke="#dde9fa" stroke-width="2" stroke-linecap="round" stroke-linejoin="round"/><circle cx="66.7" cy="492.5" r="3.3" fill="none" stroke="#dde9fa" stroke-width="2" stroke-linecap="round" stroke-linejoin="round"/><path d="M48.5,514.5 C48.5,509.5 52,506.5 57,506.5 C62,506.5 65.5,509.5 65.5,514.5 Z" fill="none" stroke="#dde9fa" stroke-width="2" stroke-linecap="round" stroke-linejoin="round"/><path d="M41,503.5 C41.5,500.5 44,498.8 47.3,498.8 C49,498.8 50.3,499.2 51.2,500 M73,503.5 C72.5,500.5 70,498.8 66.7,498.8 C65,498.8 63.7,499.2 62.8,500" fill="none" stroke="#dde9fa" stroke-width="2" stroke-linecap="round" stroke-linejoin="round"/><path d="M49.5,562 V558 a2,2 0 0 1 2,-2 H71 a2,2 0 0 1 2,2 V573.5 a2,2 0 0 1 -2,2 H59.5" fill="none" stroke="#dde9fa" stroke-width="2" stroke-linecap="round" stroke-linejoin="round"/><circle cx="49" cy="567" r="4.3" fill="none" stroke="#dde9fa" stroke-width="2" stroke-linecap="round" stroke-linejoin="round"/><path d="M41,581.5 C41,577.5 44.5,575 49,575 C53.5,575 57,577.5 57,581.5 Z" fill="none" stroke="#dde9fa" stroke-width="2" stroke-linecap="round" stroke-linejoin="round"/><path d="M60.5,575.5 V573 a1.5,1.5 0 0 1 1.5,-1.5 H66 a1.5,1.5 0 0 1 1.5,1.5 V575.5" fill="none" stroke="#dde9fa" stroke-width="2" stroke-linecap="round" stroke-linejoin="round"/><path d="M42.5,647.5 H58.3 M46.8,647.5 V624.3 L57.6,621.5 V647.5 M62.3,625 H66 a2.8,2.8 0 0 1 2.8,2.8 V645 a2.5,2.5 0 0 0 2.5,2.5" fill="none" stroke="#dde9fa" stroke-width="2" stroke-linecap="round" stroke-linejoin="round"/><circle cx="54" cy="634.4" r="1.2" fill="#dde9fa"/><rect x="45.6" y="691.3" width="22.9" height="23.4" rx="3.5" fill="none" stroke="#dde9fa" stroke-width="2" stroke-linecap="round" stroke-linejoin="round"/><path d="M51.3,688.3 V691.5 M62.8,688.3 V691.5 M45.8,696.6 H68.3 M45.8,702.2 H68.3 M45.8,708.2 H68.3 M53.2,696.6 V714.6 M61,696.6 V714.6" fill="none" stroke="#dde9fa" stroke-width="2" stroke-linecap="round" stroke-linejoin="round"/><path d="M55.5,780.5 H46.5 a2.5,2.5 0 0 1 -2.5,-2.5 V764 a2.5,2.5 0 0 1 2.5,-2.5 H55.5" fill="none" stroke="#dde9fa" stroke-width="2" stroke-linecap="round" stroke-linejoin="round"/><rect x="56" y="754.5" width="14" height="26" rx="2.5" fill="none" stroke="#dde9fa" stroke-width="2" stroke-linecap="round" stroke-linejoin="round"/><rect x="47.7" y="765.2" width="3.6" height="3.6" rx="0.8" fill="none" stroke="#dde9fa" stroke-width="1.6"/><rect x="47.7" y="771.7" width="3.6" height="3.6" rx="0.8" fill="none" stroke="#dde9fa" stroke-width="1.6"/><rect x="61.2" y="757.7" width="3.6" height="3.6" rx="0.8" fill="none" stroke="#dde9fa" stroke-width="1.6"/><rect x="61.2" y="764.7" width="3.6" height="3.6" rx="0.8" fill="none" stroke="#dde9fa" stroke-width="1.6"/><rect x="61.2" y="771.7" width="3.6" height="3.6" rx="0.8" fill="none" stroke="#dde9fa" stroke-width="1.6"/><rect x="44.2" y="824.2" width="25.6" height="19" rx="3" fill="none" stroke="#dde9fa" stroke-width="2" stroke-linecap="round" stroke-linejoin="round"/><path d="M45,826.5 L57,835.5 L69,826.5" fill="none" stroke="#dde9fa" stroke-width="2" stroke-linecap="round" stroke-linejoin="round"/><path d="M43,887.8 H59 a2.5,2.5 0 0 1 2.5,2.5 V900 a2.5,2.5 0 0 1 -2.5,2.5 H49 L45.5,906 V902.5 H43 a2.5,2.5 0 0 1 -2.5,-2.5 V890.3 a2.5,2.5 0 0 1 2.5,-2.5 Z" fill="none" stroke="#dde9fa" stroke-width="2" stroke-linecap="round" stroke-linejoin="round"/><path d="M64.5,894.5 H71.5 a2.5,2.5 0 0 1 2.5,2.5 V906.5 a2.5,2.5 0 0 1 -2.5,2.5 H68 V913 L64,909 H57.5 a2.5,2.5 0 0 1 -2.5,-2.5 V902.5" fill="none" stroke="#dde9fa" stroke-width="2" stroke-linecap="round" stroke-linejoin="round"/><circle cx="545.6" cy="54.8" r="11.2" fill="#7eaaeb"/><path d="M545.6,49.8 V59.8 M540.6,54.8 H550.6" stroke="#f4f8fe" stroke-width="2" stroke-linecap="round"/><circle cx="761.8" cy="54.6" r="11.2" fill="#7c8189"/><path d="M761.8,49.8 V59.4 M757,54.6 H766.6" stroke="#1f242c" stroke-width="2.2" stroke-linecap="round"/><rect x="980.6" y="47.4" width="23.8" height="15.2" rx="2.2" fill="none" stroke="#363a41" stroke-width="1.45" stroke-linecap="round" stroke-linejoin="round"/><circle cx="992.5" cy="55" r="4.6" fill="none" stroke="#363a41" stroke-width="1.45" stroke-linecap="round" stroke-linejoin="round"/><path d="M991.8,52.9 L992.7,52.3 V57.6 M991.6,57.6 H993.8" fill="none" stroke="#363a41" stroke-width="1.1"/><path d="M981,51 A3.5,3.5 0 0 0 984.2,47.8 M1004,51 A3.5,3.5 0 0 1 1000.8,47.8 M981,59 A3.5,3.5 0 0 1 984.2,62.2 M1004,59 A3.5,3.5 0 0 0 1000.8,62.2" fill="none" stroke="#363a41" stroke-width="1.45" stroke-linecap="round" stroke-linejoin="round"/><path d="M1209,51.5 V47 a2.8,2.8 0 0 1 2.8,-2.8 H1221.5 a2.8,2.8 0 0 1 2.8,2.8 V51.5" fill="none" stroke="#363a41" stroke-width="2.4"/><rect x="1205.5" y="51" width="22.5" height="10.5" rx="2.8" fill="#363a41"/><rect x="1209.5" y="56.8" width="14.4" height="7.6" rx="1.8" fill="#fff" stroke="#363a41" stroke-width="2.4"/><circle cx="1224.6" cy="54.3" r="1" fill="#fff"/><rect x="2004.4" y="45.9" width="19.2" height="3.6" rx="1" fill="#7d7d7d"/><rect x="2005.6" y="49.5" width="16.8" height="12.8" rx="1.5" fill="#cfcfcf"/><rect x="2010.8" y="52.4" width="6.4" height="2" rx="1" fill="#fff"/><path d="M2089,50.2 L2099.4,44.4 V63.4 L2089,57.6 Z" fill="#cfcfcf"/><path d="M2083.7,49.6 H2089.3 V63.4 H2085.3 a1.3,1.3 0 0 1 -1.3,-1.3 V57.7 a1.8,1.8 0 0 1 -1.8,-1.8 V51.4 a1.8,1.8 0 0 1 1.5,-1.8 Z" fill="#7d7d7d"/><circle cx="2099.6" cy="53.6" r="1.5" fill="#7d7d7d"/><rect x="2159" y="47" width="19" height="13.7" rx="1.6" fill="#cfcfcf"/><path d="M2160.3,47 H2176.7 a1.3,1.3 0 0 1 0.9,2.2 L2168.5,55.8 L2159.4,49.2 a1.3,1.3 0 0 1 0.9,-2.2 Z" fill="#7d7d7d"/><rect x="2327" y="216.4" width="16.6" height="16.6" rx="2.5" fill="none" stroke="#8a8d93" stroke-width="1.5"/><path d="M2331.2,223.2 H2339.6 L2335.4,227.9 Z" fill="none" stroke="#8a8d93" stroke-width="1.5" stroke-linejoin="round"/><rect x="2377" y="217.2" width="19.2" height="14.8" rx="2" fill="#7b8593"/><path d="M2377.5,220.5 L2386.6,227.6 L2395.7,220.5" fill="none" stroke="#fff" stroke-width="1.2"/><path d="M2430.5,216.2 H2447.5 a1,1 0 0 1 0.8,1.6 L2441.3,225.4 V232.5 a0.7,0.7 0 0 1 -1.1,0.5 L2437.7,231 V225.4 L2429.7,217.8 a1,1 0 0 1 0.8,-1.6 Z" fill="#7b8593"/><path d="M2483,218.7 H2497.7 M2483,224.7 H2497.7 M2483,230.8 H2497.7" stroke="#777c84" stroke-width="2.2" stroke-linecap="round"/><circle cx="449.2" cy="235.4" r="5.6" fill="none" stroke="#7e8591" stroke-width="2.6"/><path d="M453.6,239.8 L458.2,244.4" stroke="#7e8591" stroke-width="2.8" stroke-linecap="round"/><path d="M1071,318 V328.5 M1065,322.7 L1071,328.7 L1077,322.7" fill="none" stroke="#4a4d53" stroke-width="2.3" stroke-linecap="round" stroke-linejoin="round"/><rect x="428.4" y="374.80" width="16.6" height="16.6" rx="2.5" fill="#353b43"/><path d="M436.7,378.80 V387.40 M432.4,383.10 H441" stroke="#fff" stroke-width="2" stroke-linecap="butt"/><rect x="1103.1" y="367.50" width="33.2" height="33.2" rx="4" fill="#6ab868"/><rect x="428.4" y="441.15" width="16.6" height="16.6" rx="2.5" fill="#353b43"/><path d="M436.7,445.15 V453.75 M432.4,449.45 H441" stroke="#fff" stroke-width="2" stroke-linecap="butt"/><rect x="1103.1" y="433.85" width="33.2" height="33.2" rx="4" fill="#6ab868"/><rect x="428.4" y="507.50" width="16.6" height="16.6" rx="2.5" fill="#353b43"/><path d="M436.7,511.50 V520.10 M432.4,515.80 H441" stroke="#fff" stroke-width="2" stroke-linecap="butt"/><rect x="1103.1" y="500.20" width="33.2" height="33.2" rx="4" fill="#6ab868"/><rect x="428.4" y="573.85" width="16.6" height="16.6" rx="2.5" fill="#353b43"/><path d="M436.7,577.85 V586.45 M432.4,582.15 H441" stroke="#fff" stroke-width="2" stroke-linecap="butt"/><rect x="1103.1" y="566.55" width="33.2" height="33.2" rx="4" fill="#6ab868"/><rect x="428.4" y="640.20" width="16.6" height="16.6" rx="2.5" fill="#353b43"/><path d="M436.7,644.20 V652.80 M432.4,648.50 H441" stroke="#fff" stroke-width="2" stroke-linecap="butt"/><rect x="1103.1" y="632.90" width="33.2" height="33.2" rx="4" fill="#6ab868"/><rect x="428.4" y="706.55" width="16.6" height="16.6" rx="2.5" fill="#353b43"/><path d="M436.7,710.55 V719.15 M432.4,714.85 H441" stroke="#fff" stroke-width="2" stroke-linecap="butt"/><rect x="1103.1" y="699.25" width="33.2" height="33.2" rx="4" fill="#6ab868"/><rect x="428.4" y="772.90" width="16.6" height="16.6" rx="2.5" fill="#353b43"/><path d="M436.7,776.90 V785.50 M432.4,781.20 H441" stroke="#fff" stroke-width="2" stroke-linecap="butt"/><rect x="1103.1" y="765.60" width="33.2" height="33.2" rx="4" fill="#6ab868"/><rect x="428.4" y="839.25" width="16.6" height="16.6" rx="2.5" fill="#353b43"/><path d="M436.7,843.25 V851.85 M432.4,847.55 H441" stroke="#fff" stroke-width="2" stroke-linecap="butt"/><rect x="1103.1" y="831.95" width="33.2" height="33.2" rx="4" fill="#6ab868"/><rect x="428.4" y="905.60" width="16.6" height="16.6" rx="2.5" fill="#353b43"/><path d="M436.7,909.60 V918.20 M432.4,913.90 H441" stroke="#fff" stroke-width="2" stroke-linecap="butt"/><rect x="1103.1" y="898.30" width="33.2" height="33.2" rx="4" fill="#6ab868"/></svg>
<div class="t" id="t0" style="left:405.40px;top:41.68px;font-size:26.96px;color:#1d1f24;transform:scaleX(1.1000);-webkit-text-stroke:0.26px currentColor;font-weight:400;letter-spacing:1.154px;">Grupy</div>
<div class="t" id="t1" style="left:571.00px;top:44.94px;font-size:19.13px;color:#f4f8fe;transform:scaleX(1.1000);-webkit-text-stroke:0.26px currentColor;font-weight:400;letter-spacing:0.552px;">Dodaj grupę</div>
<div class="t" id="t2" style="left:787.50px;top:44.94px;font-size:19.13px;color:#1f242c;transform:scaleX(1.1000);-webkit-text-stroke:0.26px currentColor;font-weight:400;letter-spacing:0.407px;">Dodaj kolejną</div>
<div class="t" id="t3" style="left:1019.70px;top:44.94px;font-size:19.13px;color:#363a41;transform:scaleX(1.1000);-webkit-text-stroke:0.26px currentColor;font-weight:400;letter-spacing:0.006px;">Rozlicz grupy</div>
<div class="t" id="t4" style="left:1242.00px;top:44.94px;font-size:19.13px;color:#363a41;transform:scaleX(1.1000);-webkit-text-stroke:0.26px currentColor;font-weight:400;letter-spacing:0.379px;">Drukuj listę grup</div>
<div class="t" id="t5" style="left:2367.40px;top:36.58px;font-size:18.26px;color:#a3a6ad;transform:scaleX(1.1000);-webkit-text-stroke:0.26px currentColor;font-weight:400;letter-spacing:0.655px;">Dzień dobry</div>
<div class="t" id="t6" style="left:2219.70px;top:57.71px;font-size:19.28px;color:#14161a;transform:scaleX(1.1000);-webkit-text-stroke:0.7px currentColor;letter-spacing:0.269px;">Administrator Administrator</div>
<div class="t" id="t7" style="left:404.90px;top:110.45px;font-size:19.71px;color:#4b4e55;transform:scaleX(1.0984);-webkit-text-stroke:0.12px currentColor;">Grupy</div>
<div class="t" id="t8" style="left:508.00px;top:110.45px;font-size:19.71px;color:#4b4e55;transform:scaleX(1.1000);-webkit-text-stroke:0.12px currentColor;letter-spacing:0.118px;">Grupy kontaktów</div>
<div class="t" id="t9" style="left:716.40px;top:110.45px;font-size:19.71px;color:#4b4e55;transform:scaleX(1.0489);-webkit-text-stroke:0.12px currentColor;">Kursy</div>
<div class="t" id="t10" style="left:23.70px;top:129.30px;font-size:16.23px;color:#e8f0fb;transform:scaleX(0.9700);-webkit-text-stroke:0.12px currentColor;letter-spacing:1.423px;">PLACÓWKA</div>
<div class="t" id="t11" style="left:84.30px;top:173.61px;font-size:19.28px;color:#eef4fc;transform:scaleX(0.9400);-webkit-text-stroke:0.26px currentColor;font-weight:400;letter-spacing:-1.200px;">PL</div>
<div class="t" id="t12" style="left:23.70px;top:221.84px;font-size:15.36px;color:#e8f0fb;transform:scaleX(0.9700);-webkit-text-stroke:0.12px currentColor;letter-spacing:1.637px;">MENU GŁÓWNE</div>
<div class="t" id="t13" style="left:98.10px;top:278.57px;font-size:20.8px;color:#dc9a47;transform:scaleX(1.1000);-webkit-text-stroke:0.26px currentColor;font-weight:400;letter-spacing:0.856px;">Administracja</div>
<div class="t" id="t14" style="left:95.30px;top:358.59px;font-size:20.72px;color:#eef4fc;transform:scaleX(1.1000);-webkit-text-stroke:0.26px currentColor;font-weight:400;letter-spacing:0.038px;">Strona główna</div>
<div class="t" id="t15" style="left:95.30px;top:424.94px;font-size:20.72px;color:#3f6cb4;transform:scaleX(1.0853);-webkit-text-stroke:0.26px currentColor;font-weight:400;">Grupy</div>
<div class="t" id="t16" style="left:95.30px;top:491.29px;font-size:20.72px;color:#eef4fc;transform:scaleX(1.0937);-webkit-text-stroke:0.26px currentColor;font-weight:400;">Kursanci</div>
<div class="t" id="t17" style="left:95.30px;top:557.64px;font-size:20.72px;color:#eef4fc;transform:scaleX(1.0438);-webkit-text-stroke:0.26px currentColor;font-weight:400;">Lektorzy</div>
<div class="t" id="t18" style="left:95.30px;top:623.99px;font-size:20.72px;color:#eef4fc;transform:scaleX(1.0493);-webkit-text-stroke:0.26px currentColor;font-weight:400;">Sale</div>
<div class="t" id="t19" style="left:95.30px;top:690.34px;font-size:20.72px;color:#eef4fc;transform:scaleX(1.0879);-webkit-text-stroke:0.26px currentColor;font-weight:400;">Kalendarz</div>
<div class="t" id="t20" style="left:95.30px;top:756.69px;font-size:20.72px;color:#eef4fc;transform:scaleX(1.0702);-webkit-text-stroke:0.26px currentColor;font-weight:400;">Firmy</div>
<div class="t" id="t21" style="left:95.30px;top:823.04px;font-size:20.72px;color:#eef4fc;transform:scaleX(1.1000);-webkit-text-stroke:0.26px currentColor;font-weight:400;letter-spacing:0.100px;">Komunikacja</div>
<div class="t" id="t22" style="left:95.30px;top:889.39px;font-size:20.72px;color:#eef4fc;transform:scaleX(0.9400);-webkit-text-stroke:0.26px currentColor;font-weight:400;letter-spacing:-0.604px;">SMS</div>
<div class="t" id="t23" style="left:467.20px;top:224.70px;font-size:20px;color:#8c8f95;transform:scaleX(1.0324);-webkit-text-stroke:0.12px currentColor;">szukaj</div>
<div class="t" id="t24" style="left:767.20px;top:206.22px;font-size:13.62px;color:#92959b;transform:scaleX(1.1000);-webkit-text-stroke:0.12px currentColor;letter-spacing:0.186px;">Liczba grup</div>
<div class="t" id="t25" style="left:767.20px;top:223.30px;font-size:20.0px;color:#4e5158;transform:scaleX(1.0874);-webkit-text-stroke:0.12px currentColor;">34</div>
<div class="t" id="t26" style="left:470.60px;top:309.65px;font-size:19.71px;color:#54575d;transform:scaleX(0.9000);-webkit-text-stroke:0.22px currentColor;letter-spacing:0.982px;">NAZWA GRUPY</div>
<div class="t" id="t27" style="left:784.00px;top:309.72px;font-size:19.86px;color:#5a5d63;transform:scaleX(0.9000);-webkit-text-stroke:0.22px currentColor;font-style:italic;letter-spacing:0.967px;">DATA ROZPOCZĘCIA</div>
<div class="t" id="t28" style="left:1103.70px;top:309.75px;font-size:19.71px;color:#54575d;transform:scaleX(0.9000);-webkit-text-stroke:0.22px currentColor;letter-spacing:0.898px;">STATUS</div>
<div class="t" id="t29" style="left:1481.50px;top:309.87px;font-size:19.57px;color:#54575d;transform:scaleX(0.9000);-webkit-text-stroke:0.22px currentColor;letter-spacing:1.239px;">DATA ZAKOŃCZENIA</div>
<div class="t" id="t30" style="left:1874.00px;top:309.87px;font-size:19.57px;color:#54575d;transform:scaleX(0.9000);-webkit-text-stroke:0.22px currentColor;letter-spacing:0.127px;">LIMIT K...</div>
<div class="t" id="t31" style="left:1994.60px;top:309.87px;font-size:19.57px;color:#54575d;transform:scaleX(0.9000);-webkit-text-stroke:0.22px currentColor;letter-spacing:0.539px;">PRZYPISANI KURSANCI</div>
<div class="t" id="t32" style="left:470.50px;top:372.20px;font-size:20.0px;color:#4a4d53;transform:scaleX(0.9755);-webkit-text-stroke:0.12px currentColor;">English B<span style="margin:0 -1.0px 0 -1.4px">1</span> <span style="margin:0 -2.4px 0 0px">1</span>0.2025</div>
<div class="t" id="t33" style="left:784.40px;top:372.20px;font-size:20.0px;color:#4a4d53;-webkit-text-stroke:0.12px currentColor;">6.<span style="margin:0 -2.4px 0 -1.4px">1</span>0.2025</div>
<div class="t" id="t34" style="left:1481.30px;top:372.20px;font-size:20.0px;color:#4a4d53;transform:scaleX(1.0274);-webkit-text-stroke:0.12px currentColor;">4.05.2026</div>
<div class="t" id="t35" style="left:1874.00px;top:372.20px;font-size:20.0px;color:#4a4d53;-webkit-text-stroke:0.12px currentColor;">8</div>
<div class="t" id="t36" style="left:1994.60px;top:372.20px;font-size:20.0px;color:#4a4d53;-webkit-text-stroke:0.12px currentColor;">4</div>
<div class="t" id="t37" style="left:470.50px;top:438.55px;font-size:20.0px;color:#4a4d53;transform:scaleX(0.9622);-webkit-text-stroke:0.12px currentColor;">ES A<span style="margin:0 -1.0px 0 -1.4px">1</span> 09.2024</div>
<div class="t" id="t38" style="left:784.40px;top:438.55px;font-size:20.0px;color:#4a4d53;transform:scaleX(1.0194);-webkit-text-stroke:0.12px currentColor;">4.09.2025</div>
<div class="t" id="t39" style="left:1481.30px;top:438.55px;font-size:20.0px;color:#4a4d53;transform:scaleX(0.9481);-webkit-text-stroke:0.12px currentColor;"><span style="margin:0 -2.4px 0 0px">1</span>2.<span style="margin:0 -2.4px 0 -1.4px">1</span><span style="margin:0 -2.4px 0 -1.4px">1</span>.2025</div>
<div class="t" id="t40" style="left:1874.00px;top:438.55px;font-size:20.0px;color:#4a4d53;-webkit-text-stroke:0.12px currentColor;">8</div>
<div class="t" id="t41" style="left:1994.60px;top:438.55px;font-size:20.0px;color:#4a4d53;-webkit-text-stroke:0.12px currentColor;">1</div>
<div class="t" id="t42" style="left:470.50px;top:504.90px;font-size:20.0px;color:#4a4d53;transform:scaleX(1.1000);-webkit-text-stroke:0.12px currentColor;letter-spacing:0.029px;">grupa 2025/2026</div>
<div class="t" id="t43" style="left:784.40px;top:504.90px;font-size:20.0px;color:#4a4d53;transform:scaleX(1.0103);-webkit-text-stroke:0.12px currentColor;">2.09.2025</div>
<div class="t" id="t44" style="left:1481.30px;top:504.90px;font-size:20.0px;color:#4a4d53;transform:scaleX(1.0142);-webkit-text-stroke:0.12px currentColor;">28.07.2026</div>
<div class="t" id="t45" style="left:1874.00px;top:504.90px;font-size:20.0px;color:#4a4d53;-webkit-text-stroke:0.12px currentColor;">0</div>
<div class="t" id="t46" style="left:1994.60px;top:504.90px;font-size:20.0px;color:#4a4d53;-webkit-text-stroke:0.12px currentColor;">2</div>
<div class="t" id="t47" style="left:470.50px;top:571.25px;font-size:20.0px;color:#4a4d53;transform:scaleX(1.0691);-webkit-text-stroke:0.12px currentColor;">Grupa Lwy 25/26</div>
<div class="t" id="t48" style="left:784.40px;top:571.25px;font-size:20.0px;color:#4a4d53;transform:scaleX(1.0194);-webkit-text-stroke:0.12px currentColor;">6.08.2025</div>
<div class="t" id="t49" style="left:1481.30px;top:571.25px;font-size:20.0px;color:#4a4d53;transform:scaleX(1.0142);-webkit-text-stroke:0.12px currentColor;">29.07.2026</div>
<div class="t" id="t50" style="left:1874.00px;top:571.25px;font-size:20.0px;color:#4a4d53;-webkit-text-stroke:0.12px currentColor;">0</div>
<div class="t" id="t51" style="left:1994.60px;top:571.25px;font-size:20.0px;color:#4a4d53;-webkit-text-stroke:0.12px currentColor;">3</div>
<div class="t" id="t52" style="left:470.50px;top:637.60px;font-size:20.0px;color:#4a4d53;transform:scaleX(1.0272);-webkit-text-stroke:0.12px currentColor;">English B<span style="margin:0 -1.0px 0 -1.4px">1</span> - Kurs letni 2025</div>
<div class="t" id="t53" style="left:784.40px;top:637.60px;font-size:20.0px;color:#4a4d53;transform:scaleX(0.9886);-webkit-text-stroke:0.12px currentColor;">7.07.2025</div>
<div class="t" id="t54" style="left:1481.30px;top:637.60px;font-size:20.0px;color:#4a4d53;transform:scaleX(0.9719);-webkit-text-stroke:0.12px currentColor;"><span style="margin:0 -2.4px 0 0px">1</span>3.<span style="margin:0 -2.4px 0 -1.4px">1</span>0.2025</div>
<div class="t" id="t55" style="left:1874.00px;top:637.60px;font-size:20.0px;color:#4a4d53;-webkit-text-stroke:0.12px currentColor;">8</div>
<div class="t" id="t56" style="left:1994.60px;top:637.60px;font-size:20.0px;color:#4a4d53;-webkit-text-stroke:0.12px currentColor;">1</div>
<div class="t" id="t57" style="left:470.50px;top:703.95px;font-size:20.0px;color:#4a4d53;transform:scaleX(1.0529);-webkit-text-stroke:0.12px currentColor;">Angielski 2025</div>
<div class="t" id="t58" style="left:784.40px;top:703.95px;font-size:20.0px;color:#4a4d53;transform:scaleX(1.0148);-webkit-text-stroke:0.12px currentColor;">4.03.2025</div>
<div class="t" id="t59" style="left:1481.30px;top:703.95px;font-size:20.0px;color:#4a4d53;transform:scaleX(0.9503);-webkit-text-stroke:0.12px currentColor;"><span style="margin:0 -2.4px 0 0px">1</span>7.<span style="margin:0 -2.4px 0 -1.4px">1</span>2.2025</div>
<div class="t" id="t60" style="left:1874.00px;top:703.95px;font-size:20.0px;color:#4a4d53;-webkit-text-stroke:0.12px currentColor;">0</div>
<div class="t" id="t61" style="left:1994.60px;top:703.95px;font-size:20.0px;color:#4a4d53;-webkit-text-stroke:0.12px currentColor;">4</div>
<div class="t" id="t62" style="left:470.50px;top:770.30px;font-size:20.0px;color:#4a4d53;transform:scaleX(1.0672);-webkit-text-stroke:0.12px currentColor;">Angielski Grupa 2 - 2025</div>
<div class="t" id="t63" style="left:784.40px;top:770.30px;font-size:20.0px;color:#4a4d53;transform:scaleX(1.0048);-webkit-text-stroke:0.12px currentColor;">6.0<span style="margin:0 -2.4px 0 -1.4px">1</span>.2025</div>
<div class="t" id="t64" style="left:1481.30px;top:770.30px;font-size:20.0px;color:#4a4d53;transform:scaleX(1.0345);-webkit-text-stroke:0.12px currentColor;">28.05.2026</div>
<div class="t" id="t65" style="left:1874.00px;top:770.30px;font-size:20.0px;color:#4a4d53;-webkit-text-stroke:0.12px currentColor;">6</div>
<div class="t" id="t66" style="left:1994.60px;top:770.30px;font-size:20.0px;color:#4a4d53;-webkit-text-stroke:0.12px currentColor;">3</div>
<div class="t" id="t67" style="left:470.50px;top:836.65px;font-size:20.0px;color:#4a4d53;transform:scaleX(1.0161);-webkit-text-stroke:0.12px currentColor;">Business English B2</div>
<div class="t" id="t68" style="left:784.40px;top:836.65px;font-size:20.0px;color:#4a4d53;transform:scaleX(0.9510);-webkit-text-stroke:0.12px currentColor;"><span style="margin:0 -2.4px 0 0px">1</span>.0<span style="margin:0 -2.4px 0 -1.4px">1</span>.2025</div>
<div class="t" id="t69" style="left:1481.30px;top:836.65px;font-size:20.0px;color:#4a4d53;transform:scaleX(0.9719);-webkit-text-stroke:0.12px currentColor;"><span style="margin:0 -2.4px 0 0px">1</span><span style="margin:0 -2.4px 0 -1.4px">1</span>.08.2027</div>
<div class="t" id="t70" style="left:1874.00px;top:836.65px;font-size:20.0px;color:#4a4d53;-webkit-text-stroke:0.12px currentColor;">0</div>
<div class="t" id="t71" style="left:1994.60px;top:836.65px;font-size:20.0px;color:#4a4d53;-webkit-text-stroke:0.12px currentColor;">5</div>
<div class="t" id="t72" style="left:470.50px;top:903.00px;font-size:20.0px;color:#4a4d53;transform:scaleX(1.0695);-webkit-text-stroke:0.12px currentColor;">Grupa 7 23/24</div>
<div class="t" id="t73" style="left:784.40px;top:903.00px;font-size:20.0px;color:#4a4d53;transform:scaleX(0.9837);-webkit-text-stroke:0.12px currentColor;">6.<span style="margin:0 -2.4px 0 -1.4px">1</span><span style="margin:0 -2.4px 0 -1.4px">1</span>.2024</div>
<div class="t" id="t74" style="left:1481.30px;top:903.00px;font-size:20.0px;color:#4a4d53;transform:scaleX(1.0345);-webkit-text-stroke:0.12px currentColor;">24.06.2026</div>
<div class="t" id="t75" style="left:1874.00px;top:903.00px;font-size:20.0px;color:#4a4d53;-webkit-text-stroke:0.12px currentColor;">0</div>
<div class="t" id="t76" style="left:1994.60px;top:903.00px;font-size:20.0px;color:#4a4d53;-webkit-text-stroke:0.12px currentColor;">1</div>
<div class="t" style="left:1103.1px;width:33.2px;text-align:center;top:374.30px;font-size:20px;color:#eef8ec;-webkit-text-stroke:0.3px currentColor;letter-spacing:0px">4</div>
<div class="t" style="left:1103.1px;width:33.2px;text-align:center;top:440.65px;font-size:20px;color:#eef8ec;-webkit-text-stroke:0.3px currentColor;letter-spacing:0px">7</div>
<div class="t" style="left:1103.1px;width:33.2px;text-align:center;top:507.00px;font-size:20px;color:#eef8ec;-webkit-text-stroke:0.3px currentColor;letter-spacing:-0.8px">BL</div>
<div class="t" style="left:1103.1px;width:33.2px;text-align:center;top:573.35px;font-size:20px;color:#eef8ec;-webkit-text-stroke:0.3px currentColor;letter-spacing:-0.8px">BL</div>
<div class="t" style="left:1103.1px;width:33.2px;text-align:center;top:639.70px;font-size:20px;color:#eef8ec;-webkit-text-stroke:0.3px currentColor;letter-spacing:0px">7</div>
<div class="t" style="left:1103.1px;width:33.2px;text-align:center;top:706.05px;font-size:20px;color:#eef8ec;-webkit-text-stroke:0.3px currentColor;letter-spacing:-0.8px">BL</div>
<div class="t" style="left:1103.1px;width:33.2px;text-align:center;top:772.40px;font-size:20px;color:#eef8ec;-webkit-text-stroke:0.3px currentColor;letter-spacing:0px">3</div>
<div class="t" style="left:1103.1px;width:33.2px;text-align:center;top:838.75px;font-size:20px;color:#eef8ec;-webkit-text-stroke:0.3px currentColor;letter-spacing:-0.8px">BL</div>
<div class="t" style="left:1103.1px;width:33.2px;text-align:center;top:905.10px;font-size:20px;color:#eef8ec;-webkit-text-stroke:0.3px currentColor;letter-spacing:-0.8px">BL</div>
<div class="t" style="left:2488px;width:50px;text-align:center;top:43.8px;font-size:22.5px;font-weight:700;color:#3b3d52">A</div>
</body></html>
